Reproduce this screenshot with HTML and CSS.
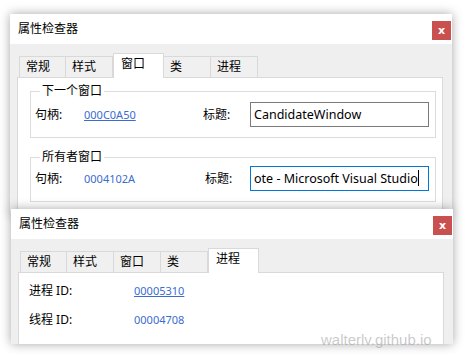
FILE: index.html
```html
<!doctype html>
<html lang=zh-CN>
<head>
	<meta charset=utf-8>
	<title>属性检查器</title>
	<link rel="stylesheet" href="styles.css">
</head>

<body>
	<div class=desk>
		<section class="window back">
			<header class=titlebar>
				<span class=title>属性检查器</span>
				<button class=close>x</button>
			</header>
			<nav class=tabs>
				<span class=tab>常规</span>
				<span class=tab>样式</span>
				<span class="tab active">窗口</span>
				<span class=tab>类</span>
				<span class=tab>进程</span>
			</nav>
			<div class=panel>
				<fieldset class=group>
					<legend>下一个窗口</legend>
					<div class=row>
						<span>句柄:</span>
						<a class="link under">000C0A50</a>
						<span>标题:</span>
						<div class=textbox>CandidateWindow</div>
					</div>
				</fieldset>
				<fieldset class="group second">
					<legend>所有者窗口</legend>
					<div class=row>
						<span>句柄:</span>
						<a class=link>0004102A</a>
						<span class=title-label>标题:</span>
						<div class="textbox focus">ote - Microsoft Visual Studio<i class=caret></i></div>
					</div>
				</fieldset>
			</div>
		</section>

		<section class="window front">
			<header class=titlebar>
				<span class=title>属性检查器</span>
				<button class=close>x</button>
			</header>
			<nav class=tabs>
				<span class=tab>常规</span>
				<span class=tab>样式</span>
				<span class=tab>窗口</span>
				<span class=tab>类</span>
				<span class="tab active">进程</span>
			</nav>
			<div class="panel process">
				<div class=prop>
					<span>进程 ID:</span>
					<a class="link under">00005310</a>
				</div>
				<div class=prop>
					<span>线程 ID:</span>
					<a class=link>00004708</a>
				</div>
			</div>
		</section>

		<span class=watermark>walterlv.github.io</span>
	</div>
</body>
</html>
```

FILE: styles.css
```css
html, body {
	margin: 0;
	background: #fff;
}

body {
	font: 12px/16px "Noto Sans", "Noto Sans CJK SC", sans-serif;
	color: #000;
}

.desk {
	position: relative;
	width: 465px;
	height: 354px;
	overflow: hidden;
}

.window {
	position: absolute;
	width: 442px;
	background: #efefef;
	box-shadow: 0 0 10px rgba(0, 0, 0, 0.35);
	overflow: hidden;
}

.window.back {
	left: 10px;
	top: 14px;
	height: 200px;
}

.window.front {
	left: 11px;
	top: 209px;
	height: 135px;
}

.titlebar {
	display: flex;
	justify-content: space-between;
	align-items: flex-start;
	height: 30px;
	background: #fff;
	box-sizing: border-box;
	padding: 7px 1px 0 8px;
}

.close {
	width: 19px;
	height: 19px;
	padding: 0;
	border: none;
	background: #c9504f;
	color: #fff;
	font: bold 11px/19px "DejaVu Sans", sans-serif;
}

.tabs {
	display: flex;
	align-items: flex-end;
	height: 24px;
	margin: 9px 0 0 9px;

	& .tab {
		width: 47px;
		height: 21px;
		box-sizing: border-box;
		border: 1px solid #d9d9d9;
		border-bottom: none;
		border-left: none;
		background: #f0f0f0;
		padding: 2px 0 0 6px;

		&:first-child {border-left: 1px solid #d9d9d9}
	}

	& .tab.active {
		width: 51px;
		height: 25px;
		background: #fff;
		border-left: 1px solid #d9d9d9;
		padding: 2px 0 0 7px;
		margin-bottom: -1px;
		position: relative;
	}
}

.panel {
	margin: 0 9px 0 7px;
	height: 200px;
	background: #fff;
	border: 1px solid #d9d9d9;
	box-sizing: border-box;
	padding: 5px 6px 0 12px;
}

.group {
	margin: 0;
	padding: 3px 6px 10px 4px;
	border: 1px solid #dcdcdc;

	& legend {
		padding: 0 2px;
		margin-left: 5px;
		line-height: 16px;
	}

	&.second {
		margin-top: 11px;
		padding-top: 1px;
	}
}

.row {
	display: grid;
	grid-template-columns: 49px 119px 47px 179px;
	align-items: center;

	& .title-label {margin-left: 2px}
}

.link {
	color: #3c6ccf;
	font-size: 11px;
	cursor: pointer;

	&.under {text-decoration: underline}
}

.textbox {
	height: 25px;
	box-sizing: border-box;
	border: 1px solid #7a7a7a;
	padding: 0 3px;
	font-size: 12.5px;
	line-height: 23px;
	white-space: nowrap;
	overflow: hidden;

	&.focus {border-color: #0078d7}
}

.caret {
	display: inline-block;
	width: 1px;
	height: 16px;
	background: #000;
	vertical-align: -3px;
}

.panel.process {
	padding: 10px 0 0 10px;
}

.prop {
	display: grid;
	grid-template-columns: 105px auto;
	justify-content: start;
	align-items: center;
	height: 16px;
	margin-bottom: 13px;
}

.watermark {
	position: absolute;
	left: 321px;
	top: 331px;
	font: 15px/18px "Liberation Sans", sans-serif;
	color: rgba(150, 150, 150, 0.5);
}
```
